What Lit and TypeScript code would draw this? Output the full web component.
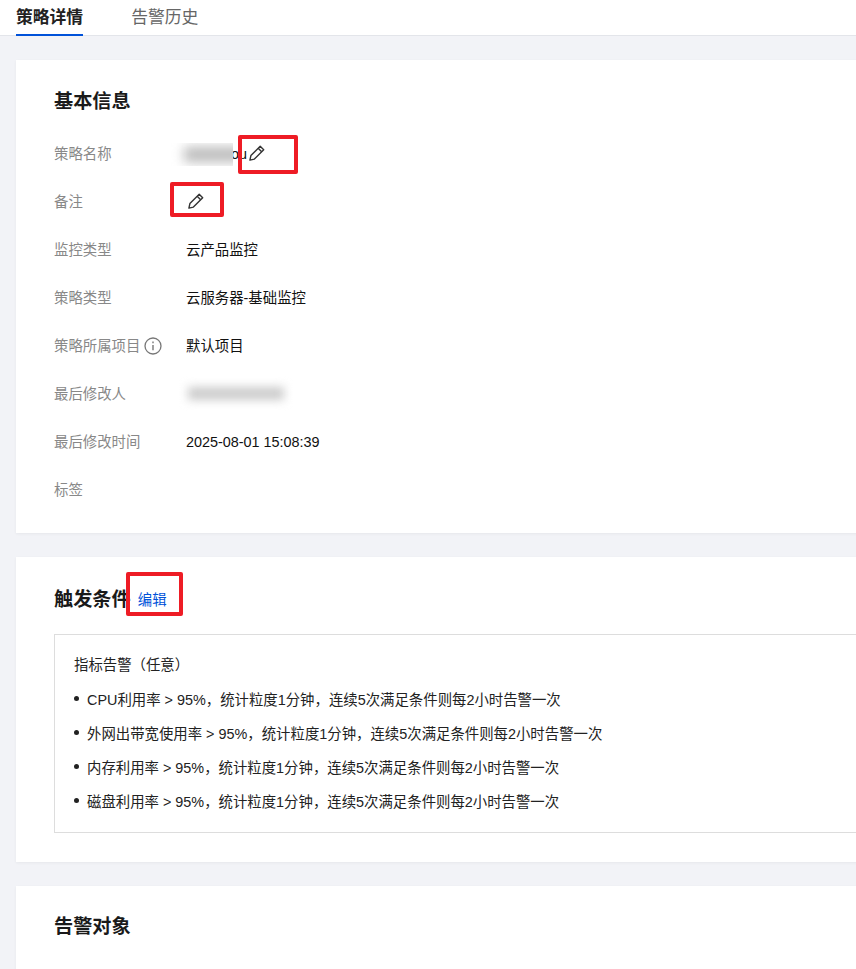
import { LitElement, html, css, svg } from "lit";
import { customElement } from "lit/decorators.js";

const pencil = svg`<svg class="pen" width="16" height="16" viewBox="0 0 16 16" fill="none" stroke="#333" stroke-width="1.4" stroke-linejoin="round"><path d="M.9 15.1l1-4.5L11.2 1.3l3.5 3.5-9.3 9.3z"/><path d="M9.2 3.3l3.5 3.5"/></svg>`;

const rules = [
  "CPU利用率 > 95%，统计粒度1分钟，连续5次满足条件则每2小时告警一次",
  "外网出带宽使用率 > 95%，统计粒度1分钟，连续5次满足条件则每2小时告警一次",
  "内存利用率 > 95%，统计粒度1分钟，连续5次满足条件则每2小时告警一次",
  "磁盘利用率 > 95%，统计粒度1分钟，连续5次满足条件则每2小时告警一次",
];

@customElement("app-root")
export class AppRoot extends LitElement {
  static styles = css`
    :host {
      display: block;
      position: relative;
      width: 856px;
      height: 969px;
      overflow: hidden;
      background: #f2f3f7;
      font-family: "Liberation Sans", "Noto Sans CJK SC", sans-serif;
      font-size: 14.4px;
      color: #111;
    }
    .page { width: 1040px; }
    .tabs {
      display: flex;
      gap: 48px;
      height: 36px;
      box-sizing: border-box;
      padding-left: 16px;
      background: #fff;
      border-bottom: 1px solid #e3e5ea;
    }
    .tab {
      height: 36px;
      flex: none;
      box-sizing: border-box;
      font-size: 16.8px;
      line-height: 36px;
      color: #666;
    }
    .tab.on {
      font-weight: 700;
      color: #222;
      border-bottom: 2px solid #0052d9;
    }
    .content {
      display: flex;
      flex-direction: column;
      gap: 24px;
      padding: 24px 16px 0;
    }
    .card {
      background: #fff;
      padding: 0 38px;
      box-shadow: 0 1px 3px rgba(0, 0, 0, 0.05);
    }
    .c1 { height: 473px; }
    .c2 { height: 305px; }
    .c3 { height: 200px; }
    h2 {
      margin: 0;
      font-size: 19.2px;
      line-height: 26px;
      font-weight: 700;
      color: #1a1a1a;
    }
    .c1 h2 { padding-top: 29px; }
    .c3 h2 { padding-top: 28px; }
    .list { display: flex; flex-direction: column; padding-top: 15px; }
    .row { display: flex; height: 48px; line-height: 48px; }
    .label { width: 132px; color: #888; display: flex; align-items: center; gap: 4px; }
    .value { display: flex; align-items: center; position: relative; }
    .info { flex: none; }
    .mask1 {
      position: absolute;
      left: -16px;
      top: 13px;
      width: 63px;
      height: 23px;
      overflow: hidden;
      background: #fff;
    }
    .mask1 i {
      position: absolute;
      left: 14px;
      top: 4px;
      width: 60px;
      height: 15px;
      background: #bbb;
      filter: blur(6px);
    }
    .gap47 { width: 45px; }
    .mask2 {
      position: absolute;
      left: 2px;
      top: 17px;
      width: 96px;
      height: 13px;
      background: #ccc;
      filter: blur(5px);
    }
    .pen { display: block; flex: none; }
    .pen1 { margin-left: 2px; margin-bottom: 2px; }
    .pen2 { margin-left: 2px; margin-bottom: 2px; }
    .head { display: flex; align-items: center; gap: 7px; padding-top: 30px; }
    .link { color: #0052d9; margin-bottom: 4px; }
    .box {
      margin-top: 21px;
      height: 199px;
      box-sizing: border-box;
      border: 1px solid #ddd;
      padding: 20px 19px 0;
      color: #222;
    }
    .box p { margin: 0 0 7px; line-height: 20px; }
    .box ul { margin: 0; padding: 0; list-style: none; }
    .box li {
      display: flex;
      align-items: center;
      gap: 8px;
      height: 33.8px;
    }
    .box li::before {
      content: "";
      width: 5px;
      height: 5px;
      border-radius: 50%;
      background: #222;
    }
    .mark {
      position: absolute;
      box-sizing: border-box;
      border: 4.5px solid #ee1c25;
      border-radius: 2px;
    }
    .m1 { left: 238px; top: 135px; width: 60px; height: 39px; }
    .m2 { left: 170px; top: 182px; width: 54px; height: 35px; }
    .m3 { left: 126px; top: 572px; width: 57px; height: 44px; }
  `;

  render() {
    return html`
      <div class="page">
        <div class="tabs">
          <div class="tab on">策略详情</div>
          <div class="tab">告警历史</div>
        </div>
        <div class="content">
          <section class="card c1">
            <h2>基本信息</h2>
            <div class="list">
              <div class="row">
                <div class="label">策略名称</div>
                <div class="value"><span class="gap47"></span><span>ou</span><span class="mask1"><i></i></span><span class="pen1">${pencil}</span></div>
              </div>
              <div class="row">
                <div class="label">备注</div>
                <div class="value"><span class="pen2">${pencil}</span></div>
              </div>
              <div class="row"><div class="label">监控类型</div><div class="value">云产品监控</div></div>
              <div class="row"><div class="label">策略类型</div><div class="value">云服务器-基础监控</div></div>
              <div class="row">
                <div class="label">策略所属项目
                  <svg class="info" width="18" height="18" viewBox="0 0 18 18" fill="none" stroke="#777" stroke-width="1.3"><circle cx="9" cy="9" r="8"/><path d="M9 8v5.2" stroke-width="1.4"/><path d="M9 4.6v1.6" stroke-width="1.4"/></svg>
                </div>
                <div class="value">默认项目</div>
              </div>
              <div class="row"><div class="label">最后修改人</div><div class="value"><span class="mask2"></span></div></div>
              <div class="row"><div class="label">最后修改时间</div><div class="value">2025-08-01 15:08:39</div></div>
              <div class="row"><div class="label">标签</div><div class="value"></div></div>
            </div>
          </section>
          <section class="card c2">
            <div class="head"><h2>触发条件</h2><span class="link">编辑</span></div>
            <div class="box">
              <p>指标告警（任意）</p>
              <ul>${rules.map((r) => html`<li>${r}</li>`)}</ul>
            </div>
          </section>
          <section class="card c3"><h2>告警对象</h2></section>
        </div>
      </div>
      <div class="mark m1"></div>
      <div class="mark m2"></div>
      <div class="mark m3"></div>
    `;
  }
}
